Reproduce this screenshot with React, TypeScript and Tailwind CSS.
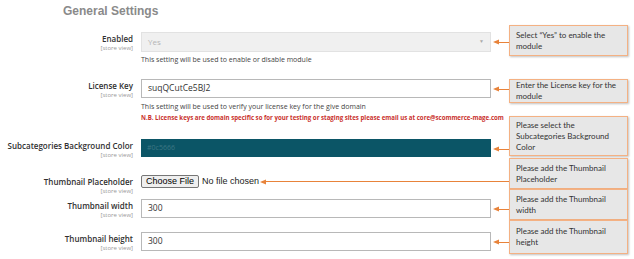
import { type FC, type ReactNode } from 'react';

const sans = { fontFamily: '"Open Sans", "Noto Sans", sans-serif' };

const Label: FC<{ text: string }> = ({ text }) => (
  <div className="w-[133px] shrink-0 text-right leading-none pt-[3px] whitespace-nowrap">
    <div className="text-[8px] font-semibold text-[#303030]">{text}</div>
    <div className="text-[6px] text-[#999] mt-[2px]">[store view]</div>
  </div>
);

const Head: FC = () => (
  <svg width="6" height="6" viewBox="0 0 6 6" className="shrink-0">
    <path d="M0 3 L6 0.5 L6 5.5 Z" fill="#e8833a" />
  </svg>
);

const Arrow: FC = () => (
  <div className="flex items-center w-[18px] h-[20px] pl-[2px]">
    <Head />
    <div className="flex-1 h-px bg-[#e8833a]" />
  </div>
);

const Row: FC<{ label: string; children: ReactNode; className?: string }> = ({ label, children, className = '' }) => (
  <div className={`flex items-start ${className}`}>
    <Label text={label} />
    <div className="w-[350px] ml-2 shrink-0">{children}</div>
    <Arrow />
  </div>
);

const Callout: FC<{ children: ReactNode; className: string }> = ({ children, className }) => (
  <div
    className={`w-[119px] border border-[#f4b183] bg-[#e7e7e7] shadow-[1px_1px_2px_rgba(0,0,0,0.25)] flex items-center px-[6px] text-[8px] leading-[11px] text-[#333] ${className}`}
    style={{ fontFamily: 'Lato, "Open Sans", sans-serif' }}
  >
    <div>{children}</div>
  </div>
);

const TextInput: FC<{ value: string }> = ({ value }) => (
  <div className="h-[19px] bg-white border border-[#b8b8b8] flex items-center px-[6px]">
    <span className="text-[8.5px] text-[#333]">{value}</span>
  </div>
);

export default function App() {
  return (
    <div className="w-[634px] h-[259px] bg-white flex overflow-hidden" style={sans}>
      <div className="w-[509px] shrink-0">
        <h2
          className="pl-[63px] pt-[4px] text-[12px] leading-[14px] font-bold text-[#8a8a8a]"
          style={{ fontFamily: '"Liberation Sans", Arial, sans-serif' }}
        >
          General Settings
        </h2>

        {/* Enabled */}
        <Row label="Enabled" className="mt-[14px]">
          <div className="h-[20px] bg-[#f0f0f0] border border-[#e2e2e2] flex items-center justify-between px-[6px]">
            <span className="text-[8px] text-[#b5b5b5]">Yes</span>
            <span className="text-[5px] text-[#aaa]">▼</span>
          </div>
          <div className="text-[7px] leading-[10px] text-[#444] mt-[3px]">
            This setting will be used to enable or disable module
          </div>
        </Row>

        {/* License key */}
        <Row label="License Key" className="mt-[14px]">
          <TextInput value="suqQCutCe5BJ2" />
          <div className="text-[7px] leading-[10px] text-[#444] mt-[4px]">
            This setting will be used to verify your license key for the give domain
          </div>
          <div className="text-[6.1px] leading-[10px] font-bold text-[#c9302c] mt-[1px] whitespace-nowrap">
            N.B. License keys are domain specific so for your testing or staging sites please email us at core@scommerce-mage.com
          </div>
        </Row>

        {/* Color */}
        <Row label="Subcategories Background Color" className="mt-[16px]">
          <div className="h-[18px] bg-[#0b5566] flex items-center px-[6px]">
            <span className="text-[7px] text-[#3c7684]">#0c5666</span>
          </div>
        </Row>

        {/* Placeholder */}
        <div className="flex items-start mt-[16px]">
          <Label text="Thumbnail Placeholder" />
          <div
            className="ml-2 h-[13px] flex items-center flex-1 min-w-0"
            style={{ fontFamily: '"Liberation Sans", Arial, sans-serif' }}
          >
            <button className="h-[13px] px-[4px] text-[9px] leading-none text-black bg-[#efefef] border border-[#767676] rounded-[2px] shrink-0">
              Choose File
            </button>
            <span className="text-[9px] text-[#222] ml-[3px] shrink-0">No file chosen</span>
            <div className="ml-[1px]">
              <Head />
            </div>
            <div className="flex-1 h-px bg-[#e8833a]" />
          </div>
        </div>

        {/* Width */}
        <Row label="Thumbnail width" className="mt-[5px]">
          <TextInput value="300" />
        </Row>

        {/* Height */}
        <Row label="Thumbnail height" className="mt-[13px]">
          <TextInput value="300" />
        </Row>
      </div>

      <div className="flex flex-col">
        <Callout className="mt-[25px] h-[31px]">Select “Yes” to enable the module</Callout>
        <Callout className="mt-[23px] h-[24px]">Enter the License key for the module</Callout>
        <Callout className="mt-[13px] h-[40px]">Please select the Subcategories Background Color</Callout>
        <Callout className="mt-[2px] h-[31px]">Please add the Thumbnail Placeholder</Callout>
        <Callout className="h-[31px]">Please add the Thumbnail width</Callout>
        <Callout className="h-[34px]">Please add the Thumbnail height</Callout>
      </div>
    </div>
  );
}
